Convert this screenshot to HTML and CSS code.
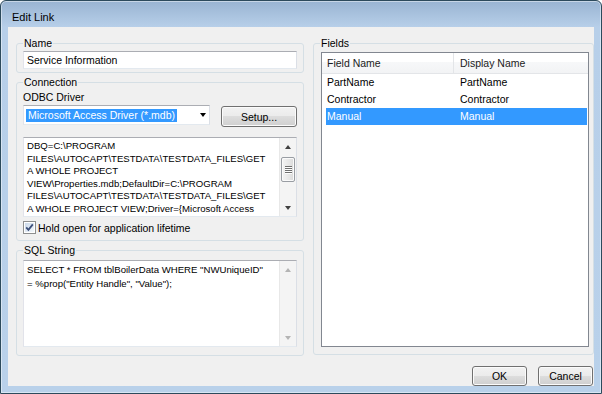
FILE: index.html
```html
<!DOCTYPE html>
<html lang="en">
<head>
  <meta charset="utf-8">
  <title>Edit Link</title>
  <link rel="stylesheet" href="styles.css">
</head>
<body>
  <div class="window">
    <div class="titlebar">Edit Link</div>

    <div class="client">
      <div class="left-col">
        <fieldset class="group group-name">
          <legend>Name</legend>
          <div class="textbox">Service Information</div>
        </fieldset>

        <fieldset class="group group-conn">
          <legend>Connection</legend>
          <div class="label">ODBC Driver</div>
          <div class="driver-row">
            <div class="combo">
              <span class="combo-sel">Microsoft Access Driver (*.mdb)</span>
              <span class="combo-arrow"></span>
            </div>
            <button class="btn btn-setup">Setup...</button>
          </div>
          <div class="memo memo-conn">
            <div class="memo-text">DBQ=C:\PROGRAM
FILES\AUTOCAPT\TESTDATA\TESTDATA_FILES\GET
A WHOLE PROJECT
VIEW\Properties.mdb;DefaultDir=C:\PROGRAM
FILES\AUTOCAPT\TESTDATA\TESTDATA_FILES\GET
A WHOLE PROJECT VIEW;Driver={Microsoft Access</div>
            <div class="vscroll">
              <div class="sb-btn"><span class="arrow-up"></span></div>
              <div class="sb-track"><div class="sb-thumb"><span class="grip"></span></div></div>
              <div class="sb-btn"><span class="arrow-down"></span></div>
            </div>
          </div>
          <label class="check-row">
            <span class="checkbox">
              <svg width="13" height="13" viewBox="0 0 13 13">
                <defs>
                  <linearGradient id="cbfill" x1="0" y1="0" x2="1" y2="1">
                    <stop offset="0" stop-color="#cbd9ea"/>
                    <stop offset="1" stop-color="#f4f8fc"/>
                  </linearGradient>
                </defs>
                <rect x="0.5" y="0.5" width="12" height="12" fill="#fff" stroke="#8e8f8f"/>
                <rect x="2" y="2" width="9" height="9" fill="url(#cbfill)"/>
                <path d="M3.2 6.4 L5.4 8.8 L9.8 3.4" fill="none" stroke="#3c4f7a" stroke-width="1.8"/>
              </svg>
            </span>
            Hold open for application lifetime
          </label>
        </fieldset>

        <fieldset class="group group-sql">
          <legend>SQL String</legend>
          <div class="memo memo-sql">
            <div class="memo-text">SELECT * FROM tblBoilerData WHERE "NWUniqueID"
= %prop("Entity Handle", "Value");</div>
            <div class="vscroll">
              <div class="sb-btn"><span class="arrow-up disabled"></span></div>
              <div class="sb-track"></div>
              <div class="sb-btn"><span class="arrow-down disabled"></span></div>
            </div>
          </div>
        </fieldset>
      </div>

      <fieldset class="group group-fields">
        <legend>Fields</legend>
        <div class="listview">
          <div class="lv-header">
            <div class="lv-head c1">Field Name</div>
            <div class="lv-head c2">Display Name</div>
          </div>
          <div class="lv-row"><div class="lv-cell">PartName</div><div class="lv-cell">PartName</div></div>
          <div class="lv-row"><div class="lv-cell">Contractor</div><div class="lv-cell">Contractor</div></div>
          <div class="lv-row selected"><div class="lv-cell">Manual</div><div class="lv-cell">Manual</div></div>
        </div>
      </fieldset>

      <div class="dialog-buttons">
        <button class="btn btn-dialog">OK</button>
        <button class="btn btn-dialog">Cancel</button>
      </div>
    </div>
  </div>
</body>
</html>
```

FILE: styles.css
```css
* {
  box-sizing: border-box;
}

body {
  margin: 0;
  background: #ffffff;
  font-family: "Liberation Sans", Arial, sans-serif;
  font-size: 10.5px;
  color: #000000;
}

/* window frame */
.window {
  width: 602px;
  height: 394px;
  border: 1px solid #2c4a5c;
  border-radius: 6px 6px 0 0;
  padding: 0 7px 7px;
  display: flex;
  flex-direction: column;
  background: linear-gradient(#99b4d2 0, #b7cfe9 26px, #b9d1ea 100%);
  box-shadow: inset 0 0 0 1px rgba(255, 255, 255, 0.45);
}

.titlebar {
  height: 26px;
  padding: 9px 0 0 4px;
  font-size: 11px;
  line-height: 15px;
  color: #000;
}

.client {
  flex: 1;
  background: #f0f0f0;
  display: grid;
  grid-template-columns: 288px 281px;
  grid-template-rows: 320px auto;
  column-gap: 9px;
  padding: 9px 0 0 8px;
}

.left-col {
  display: flex;
  flex-direction: column;
  gap: 2px;
}

/* group boxes */
.group {
  margin: 0;
  min-width: 0;
  border: 1px solid #d5dfe5;
  border-radius: 3px;
  padding: 0 6px;
}

.group legend {
  padding: 0 1px;
  line-height: 15px;
}

.group-name {
  padding-bottom: 3px;
}

.group-conn {
  padding-bottom: 4px;
}

.group-sql {
  padding-bottom: 8px;
}

.group-fields {
  height: 319px;
  padding: 1px 4px 0 7px;
}

.group-fields legend {
  margin-left: -1px;
}

/* inputs */
.textbox,
.combo,
.memo {
  background: #fff;
  border: 1px solid;
  border-color: #abadb3 #dbdfe6 #e3e9ef #e2e3ea;
}

.textbox {
  height: 18px;
  line-height: 16px;
  padding-left: 3px;
}

.label {
  line-height: 15px;
}

.driver-row {
  display: flex;
  gap: 11px;
  height: 22px;
}

.combo {
  width: 187px;
  height: 20px;
  display: flex;
  align-items: center;
  justify-content: space-between;
  padding: 0 3px 0 2px;
}

.combo-sel {
  background: #3399ff;
  color: #fff;
  line-height: 13px;
  padding: 0 2px;
}

.combo-arrow {
  width: 0;
  height: 0;
  border-top: 4px solid #000;
  border-left: 3.5px solid transparent;
  border-right: 3.5px solid transparent;
}

.btn {
  font-family: inherit;
  font-size: 10.5px;
  color: #000;
  border: 1px solid #707070;
  border-radius: 3px;
  padding: 0;
  background: linear-gradient(#f2f2f2 0%, #ebebeb 50%, #dddddd 50%, #cfcfcf 100%);
  box-shadow: inset 0 0 0 1px #fbfbfb;
}

.btn-setup {
  width: 76px;
  height: 21px;
  margin-top: 1px;
}

.memo {
  display: flex;
  overflow: hidden;
}

.memo-text {
  flex: 1;
  min-width: 0;
  overflow: hidden;
  white-space: pre;
  font-size: 9.6px;
  line-height: 12.6px;
  padding: 2px 0 0 3px;
}

.memo-conn {
  height: 80px;
  margin-top: 10px;
}

.memo-sql {
  height: 87px;
  margin-top: 2px;
}

.memo-sql .memo-text {
  padding-top: 2px;
  line-height: 13.5px;
}

/* scroll bar */
.vscroll {
  width: 17px;
  flex: none;
  display: flex;
  flex-direction: column;
  background: #f4f4f4;
  border-left: 1px solid #e8e8e8;
}

.sb-btn {
  height: 17px;
  display: flex;
  align-items: center;
  justify-content: center;
}

.sb-track {
  flex: 1;
  padding-top: 2px;
}

.sb-thumb {
  height: 25px;
  margin: 0 1px;
  border: 1px solid #999da3;
  border-radius: 2px;
  background: linear-gradient(90deg, #f3f3f3, #e6e6e6 60%, #dadada);
  box-shadow: inset 0 0 0 1px #fafafa;
  display: flex;
  align-items: center;
  justify-content: center;
}

.grip {
  width: 7px;
  height: 8px;
  background: repeating-linear-gradient(#6f6f6f 0 1px, #fdfdfd 1px 2px);
}

.arrow-up,
.arrow-down {
  width: 0;
  height: 0;
  border-left: 3.5px solid transparent;
  border-right: 3.5px solid transparent;
}

.arrow-up {
  border-bottom: 4px solid #404040;
}

.arrow-down {
  border-top: 4px solid #404040;
}

.arrow-up.disabled {
  border-bottom-color: #b4b4b4;
}

.arrow-down.disabled {
  border-top-color: #b4b4b4;
}

/* checkbox */
.check-row {
  display: flex;
  align-items: center;
  height: 17px;
  margin-top: 2px;
}

.checkbox {
  width: 13px;
  height: 13px;
  margin-right: 2px;
  display: flex;
}

/* list view */
.listview {
  height: 295px;
  border: 1px solid #828790;
  background: #fff;
}

.lv-header {
  display: flex;
  height: 21px;
  border-bottom: 1px solid #e3e5e8;
  background: linear-gradient(#ffffff 0%, #ffffff 45%, #f7f8f9 45%, #f2f3f5 100%);
}

.lv-head {
  line-height: 20px;
  color: #1b1b1b;
}

.lv-head.c1 {
  width: 131px;
  padding-left: 5px;
}

.lv-head.c2 {
  flex: 1;
  padding-left: 6px;
  border-left: 1px solid #e3e5e8;
}

.lv-row {
  display: grid;
  grid-template-columns: 127px 1fr;
  height: 17px;
  line-height: 17px;
  margin: 0 1px 0 4px;
}

.lv-cell:first-child {
  padding-left: 1px;
}

.lv-cell:last-child {
  padding-left: 7px;
}

.lv-row.selected {
  background: #3399ff;
  color: #fff;
}

/* OK / Cancel */
.dialog-buttons {
  grid-column: 1 / -1;
  display: flex;
  justify-content: flex-end;
  gap: 11px;
  margin-top: 10px;
  padding-right: 1px;
}

.btn-dialog {
  width: 55px;
  height: 20px;
}
```
